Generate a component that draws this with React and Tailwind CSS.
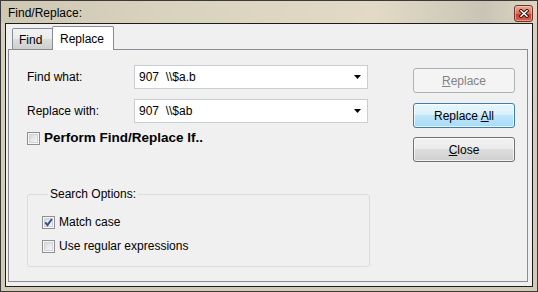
import React from "react";

function CheckBox({ checked }) {
  return (
    <span className="relative w-[13px] h-[13px] shrink-0 border border-[#8e8f8f] bg-[#f8f8f8] p-[1px] flex">
      <span className="flex-1 border border-[#d0d3d7] bg-[linear-gradient(135deg,#d6d9dd,#f7f7f7)]" />
      {checked && (
        <svg className="absolute left-[-1px] top-[-1px]" width="13" height="13" viewBox="0 0 13 13">
          <path d="M3.2 6.4 L5.5 9.2 L9.9 3" fill="none" stroke="#3b4f8c" strokeWidth="2" />
        </svg>
      )}
    </span>
  );
}

function Combo({ value }) {
  return (
    <div className="w-[234px] h-[24px] border border-[#c9cdd4] bg-white flex items-center pl-[4px] pr-[6px]">
      <span className="flex-1 whitespace-pre">{value}</span>
      <svg width="7" height="4" viewBox="0 0 7 4">
        <polygon points="0,0 7,0 3.5,4" fill="#000" />
      </svg>
    </div>
  );
}

function Btn({ children, variant }) {
  const cls =
    variant === "disabled"
      ? "border-[#adb2b5] bg-[#f4f4f4] text-[#838383]"
      : variant === "default"
      ? "border-[#3c7fb1] bg-[linear-gradient(to_bottom,#eaf6fd,#d9f0fc_50%,#bee6fd_50%,#a9dbf6)] shadow-[inset_0_0_0_1px_rgba(255,255,255,0.7)]"
      : "border-[#707070] bg-[linear-gradient(to_bottom,#f2f2f2,#ebebeb_50%,#dddddd_50%,#cfcfcf)] shadow-[inset_0_0_0_1px_rgba(255,255,255,0.7)]";
  return (
    <div className={`w-[102px] h-[25px] rounded-[3px] border flex items-center justify-center ${cls}`}>
      {children}
    </div>
  );
}

export default function App() {
  return (
    <div className="w-[538px] h-[292px] border border-[#3a3a3a] bg-[linear-gradient(to_bottom,#d8d1bd,#d2cab3)] flex flex-col font-['Liberation_Sans',Arial,sans-serif] text-[12px] text-black overflow-hidden">
      {/* Title bar */}
      <div className="h-[22px] shrink-0 flex items-start justify-between pl-[7px] pr-[4px] bg-[linear-gradient(to_right,#cdc7b4,#d9d2bf_30%,#e2dac6_70%,#c9c5b6_90%,#ddd5bf)]">
        <span className="mt-[5px] leading-[14px]">Find/Replace:</span>
        <div className="mt-[4px] w-[19px] h-[17px] rounded-[3px] border border-[#6b3434] bg-[linear-gradient(to_bottom,#eeab98,#dc6a52_50%,#c9432a_55%,#d86048)] shadow-[inset_0_0_0_1px_rgba(255,220,210,0.5)] flex items-center justify-center">
          <svg width="10" height="9" viewBox="0 0 10 9">
            <path d="M2 1.8 L8 7.2 M8 1.8 L2 7.2" stroke="#2b1414" strokeWidth="3.4" strokeLinecap="square" />
            <path d="M2 1.8 L8 7.2 M8 1.8 L2 7.2" stroke="#ffffff" strokeWidth="1.5" strokeLinecap="square" />
          </svg>
        </div>
      </div>

      {/* Client area */}
      <div className="flex-1 ml-[4px] mr-[4px] mb-[4px] border border-[#1c1c1c] bg-[#f0f0f0] flex flex-col pl-[2px] pr-[4px] pb-[4px]">
        {/* Tab strip */}
        <div className="h-[25px] shrink-0 flex items-end pl-[4px]">
          <div className="w-[41px] h-[21px] border border-b-0 border-[#898c95] rounded-t-[2px] bg-[linear-gradient(to_bottom,#f2f2f2,#ebebeb_50%,#dddddd_50%,#cfcfcf)] flex items-center pl-[6px] pt-[1px]">
            Find
          </div>
          <div className="relative z-10 ml-[-1px] mb-[-1px] w-[62px] h-[24px] border border-b-0 border-[#898c95] rounded-t-[2px] bg-white flex items-center pl-[7px]">
            Replace
          </div>
        </div>

        {/* Panel */}
        <div className="flex-1 border border-[#898c95] bg-[#f0f0f0] flex">
          <div className="w-[361px] pl-[18px] pt-[15px] flex flex-col">
            <div className="h-[24px] flex items-center">
              <span className="w-[107px]">Find what:</span>
              <Combo value={"907  \\\\$a.b"} />
            </div>
            <div className="h-[24px] mt-[10px] flex items-center">
              <span className="w-[107px]">Replace with:</span>
              <Combo value={"907  \\\\$ab"} />
            </div>
            <div className="h-[16px] mt-[7px] flex items-center gap-[4px]">
              <CheckBox />
              <span className="font-bold text-[13.5px]">Perform Find/Replace If..</span>
            </div>
            <fieldset className="mt-[41px] w-[343px] border border-[#d5dfe5] rounded-[3px] pl-[14px] pt-[13px] pb-[12px]">
              <legend className="ml-[6px] px-[2px] leading-[14px]">Search Options:</legend>
              <div className="h-[16px] flex items-center gap-[4px]">
                <CheckBox checked />
                <span>Match case</span>
              </div>
              <div className="h-[16px] mt-[8px] flex items-center gap-[4px]">
                <CheckBox />
                <span>Use regular expressions</span>
              </div>
            </fieldset>
          </div>
          <div className="ml-[43px] pt-[18px] flex flex-col">
            <Btn variant="disabled">
              <span><span className="underline">R</span>eplace</span>
            </Btn>
            <div className="mt-[10px]">
              <Btn variant="default">
                <span>Replace <span className="underline">A</span>ll</span>
              </Btn>
            </div>
            <div className="mt-[9px]">
              <Btn>
                <span><span className="underline">C</span>lose</span>
              </Btn>
            </div>
          </div>
        </div>
      </div>
    </div>
  );
}
